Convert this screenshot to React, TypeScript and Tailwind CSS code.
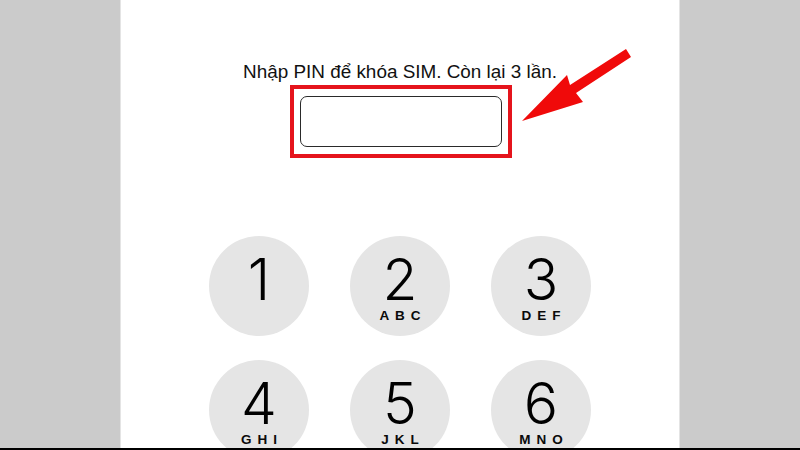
import React from "react";

const keys = [
  { d: "1", l: "" },
  { d: "2", l: "ABC" },
  { d: "3", l: "DEF" },
  { d: "4", l: "GHI" },
  { d: "5", l: "JKL" },
  { d: "6", l: "MNO" },
];

export default function App() {
  return (
    <div className="relative w-[800px] h-[450px] overflow-hidden bg-white flex flex-col" style={{ fontFamily: "'Liberation Sans', Arial, sans-serif" }}>
      <div className="flex flex-1 min-h-0">
        <div className="w-[121px] shrink-0 bg-[#cbcbcb] border-r border-[#e4e4e4]" />
        <div className="flex-1 bg-white flex flex-col items-center pt-[61px] overflow-hidden">
          <div className="shrink-0 text-[18.9px] leading-[22px] text-[#111]">Nhập PIN để khóa SIM. Còn lại 3 lần.</div>
          <div className="shrink-0 mt-[2px] ml-[2px] w-[222px] h-[73px] border-[4px] border-[#e5141c] flex items-center justify-center">
            <div className="w-[202px] h-[51px] rounded-[7px] border-[1.5px] border-[#2a2a2a] bg-white" />
          </div>
          <div className="shrink-0 mt-[78px] grid grid-cols-[100px_100px_100px] gap-x-[41px] gap-y-[24px]">
            {keys.map((k) => (
              <div key={k.d} className="w-[100px] h-[100px] rounded-full bg-[#e5e5e5] flex flex-col items-center">
                {k.l ? (
                  <>
                    <div className="mt-[23px] text-[57px] leading-[42px] font-light text-black" style={{ fontFamily: "Inter, sans-serif" }}>{k.d}</div>
                    <div className="mt-[9px] text-[13.5px] leading-[12px] font-bold tracking-[6px] pl-[6px] text-[#0a0a0a]" style={{ fontFamily: "'Liberation Sans', Arial, sans-serif" }}>{k.l}</div>
                  </>
                ) : (
                  <div className="mt-[23px] text-[57px] leading-[42px] font-light text-black" style={{ fontFamily: "Inter, sans-serif" }}>{k.d}</div>
                )}
              </div>
            ))}
          </div>
        </div>
        <div className="w-[121px] shrink-0 bg-[#cbcbcb] border-l border-[#e4e4e4]" />
      </div>
      <div className="h-[2px] shrink-0 bg-black" />
      <svg className="absolute left-0 top-0" width="800" height="450" viewBox="0 0 800 450">
        <polygon points="522,121 567,75 570,85 626,49 631,57 576,93 583,102" fill="#f00a0a" />
      </svg>
    </div>
  );
}
